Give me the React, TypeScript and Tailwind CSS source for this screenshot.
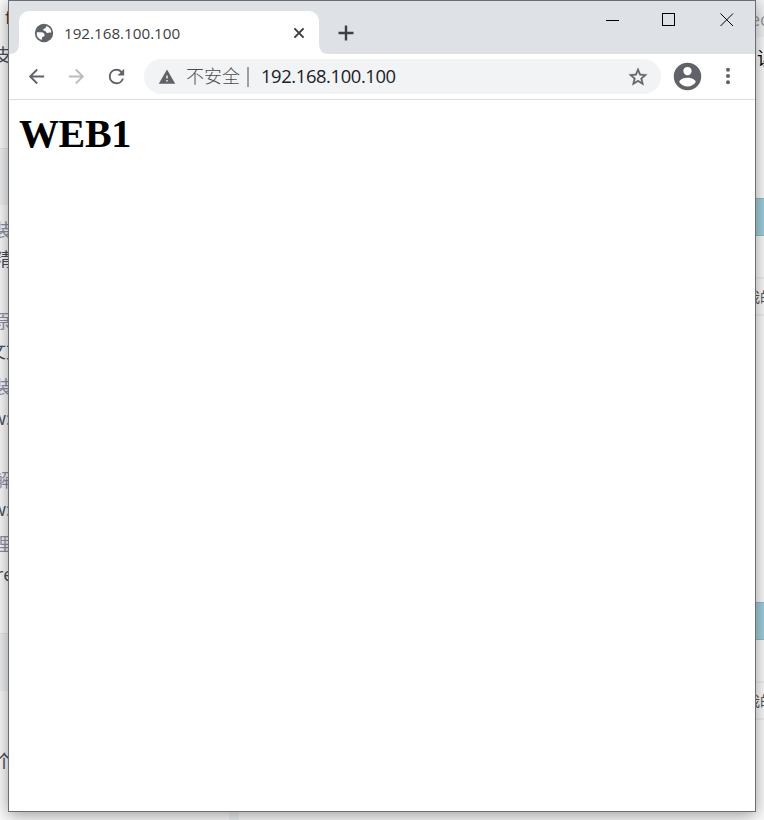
import type { ReactNode } from "react";
import clsx from "clsx";

type Band = {
  height: string;
  className?: string;
  text?: string;
};

// Page behind the window, left edge
const leftBands: Band[] = [
  { height: "h-[35px]", className: "text-[19px] text-[#333] pl-[5px]", text: "f" },
  { height: "h-[9px]" },
  { height: "h-[22px]", className: "text-[18px] text-[#4d4d5c] -ml-[6px]", text: "支" },
  { height: "h-[82px]" },
  { height: "h-[57px]", className: "bg-[#f0f1f2] border-t border-[#e6eaec]" },
  { height: "h-[11px]" },
  { height: "h-[28px]", className: "text-[18px] text-[#9090a6] -ml-[6px]", text: "装" },
  { height: "h-[30px]", className: "text-[18px] text-[#4d4d5c] -ml-[6px]", text: "精" },
  { height: "h-[32px]" },
  { height: "h-[30px]", className: "text-[18px] text-[#9090a6] -ml-[7px]", text: "原" },
  { height: "h-[30px]", className: "text-[18px] text-[#4d4d5c] -ml-[12px]", text: "文文" },
  { height: "h-[42px]", className: "text-[18px] text-[#9090a6] -ml-[6px]", text: "装" },
  { height: "h-[20px]", className: "text-[18px] text-[#4d4d5c] -ml-[8px]", text: "w:" },
  { height: "h-[38px]" },
  { height: "h-[28px]", className: "text-[18px] text-[#9090a6] -ml-[7px]", text: "解" },
  { height: "h-[30px]", className: "text-[18px] text-[#4d4d5c] -ml-[8px]", text: "w:" },
  { height: "h-[40px]", className: "text-[18px] text-[#9090a6] -ml-[7px]", text: "理" },
  { height: "h-[20px]", className: "text-[18px] text-[#4d4d5c] -ml-[4px]", text: "re" },
  { height: "h-[49px]" },
  { height: "h-[58px]", className: "bg-[#f0f1f2] border-t border-[#e6eaec]" },
  { height: "h-[60px]" },
  { height: "h-[20px]", className: "text-[18px] text-[#4d4d5c] -ml-[5px]", text: "个" },
];

// Page behind the window, right edge
const rightBands: Band[] = [
  { height: "h-[37px]", className: "bg-[#f2f4f5] text-[18px] text-[#999] -ml-[5px] -mr-[2px]", text: "ec" },
  { height: "h-[7px]" },
  { height: "h-[28px]", className: "text-[18px] text-black pl-[2px]", text: "误" },
  { height: "h-[126px]" },
  { height: "h-[38px]", className: "bg-[#a0d0dc] border-y border-[#90bfca]" },
  { height: "h-[41px]" },
  { height: "h-[39px]", className: "border-y-2 border-[#f0f0f0] text-[14px] text-[#555] -ml-[9px]", text: "我的" },
  { height: "h-[286px]" },
  { height: "h-[38px]", className: "bg-[#a0d0dc] border-y border-[#90bfca]" },
  { height: "h-[41px]" },
  { height: "h-[39px]", className: "border-y-2 border-[#f0f0f0] text-[14px] text-[#555] -ml-[9px]", text: "我的" },
];

function Bands({ bands }: { bands: Band[] }) {
  return (
    <div className="w-[9px] shrink-0 overflow-hidden">
      {bands.map((band, i) => (
        <div
          key={i}
          className={clsx("flex items-center whitespace-nowrap leading-none", band.height, band.className)}
        >
          {band.text}
        </div>
      ))}
    </div>
  );
}

function Icon({ className, children }: { className: string; children: ReactNode }) {
  return (
    <svg viewBox="0 0 24 24" className={clsx("shrink-0", className)} fill="currentColor">
      {children}
    </svg>
  );
}

function TabStrip() {
  return (
    <div className="flex h-[53px] bg-[#dee1e6] pt-[10px]">
      <svg width="10" height="10" viewBox="0 0 10 10" className="self-end shrink-0">
        <path d="M0 10H10V0Q10 10 0 10Z" fill="#fff" />
      </svg>
      <div className="flex w-[300px] items-center rounded-t-[10px] bg-white pl-[14px] pr-[12px]">
        <Icon className="h-[22px] w-[22px] text-[#5f6368]">
          <circle cx="12" cy="12" r="10" />
          <path
            fill="#fff"
            d="M14.5 4.3c0 1.3-.6 2.4-1.9 2.7-.9.2-1.500.6-1.400 1.500.2.9.8 1.200 1.700 1.300 1.400.2 1.300 1.900 2.600 2.200 1.100.2 2.200-.5 4.500-.4a8 8 0 0 0-5.500-7.300zM4.100 11.200h4.700c2.500 0 3.800 1.200 3.800 3.200 0 1-.6 1.500-1.600 1.600-.8.1-1.100.6-1.200 1.300l-.2 2.400a8 8 0 0 1-5.500-8.500z"
          />
        </Icon>
        <span className="ml-[9px] text-[15.2px] leading-5 text-[#3c4043]">192.168.100.100</span>
        <svg viewBox="0 0 16 16" className="ml-auto h-4 w-4" stroke="#3c4043" strokeWidth="2">
          <path d="M3.4 3.4l9.2 9.2M12.6 3.4l-9.2 9.2" />
        </svg>
      </div>
      <svg width="10" height="10" viewBox="0 0 10 10" className="self-end shrink-0">
        <path d="M10 10H0V0Q0 10 10 10Z" fill="#fff" />
      </svg>
      <svg viewBox="0 0 16 16" className="ml-[9px] mt-[14px] h-4 w-4" stroke="#3c4043" strokeWidth="2.4">
        <path d="M8 .5v15M.5 8h15" />
      </svg>
      <div className="-mt-[10px] ml-auto flex h-[37px] items-center gap-[43px] pr-[21px] text-black">
        <svg width="14" height="14" viewBox="0 0 14 14">
          <path d="M0 7.5h13" stroke="currentColor" />
        </svg>
        <svg width="14" height="14" viewBox="0 0 14 14" className="-ml-px">
          <rect x=".5" y=".5" width="12" height="12" fill="none" stroke="currentColor" />
        </svg>
        <svg width="14" height="14" viewBox="0 0 14 14" className="ml-px">
          <path d="M.5.5l12.5 12.5M13 .5L.5 13" stroke="currentColor" />
        </svg>
      </div>
    </div>
  );
}

function Toolbar() {
  return (
    <div className="flex h-[46px] items-center border-b border-[#dadce0] bg-white pl-4 text-[#5f6368]">
      <Icon className="h-[23px] w-[23px]">
        <path d="M20 11H7.83l5.59-5.59L12 4l-8 8 8 8 1.41-1.41L7.83 13H20v-2z" />
      </Icon>
      <Icon className="ml-[17px] h-[23px] w-[23px] text-[#babcbe]">
        <path d="M12 4l-1.41 1.41L16.17 11H4v2h12.17l-5.58 5.59L12 20l8-8z" />
      </Icon>
      <Icon className="ml-[17px] h-[23px] w-[23px]">
        <path d="M17.65 6.35A7.96 7.96 0 0 0 12 4a8 8 0 1 0 7.73 10h-2.08A6 6 0 1 1 12 6c1.66 0 3.14.69 4.22 1.78L13 11h7V4l-2.35 2.35z" />
      </Icon>

      <div className="ml-4 flex h-[35px] w-[517px] items-center rounded-full bg-[#f1f3f4] pl-[14px] pr-[12px]">
        <Icon className="h-[18px] w-[18px]">
          <path d="M1 21h22L12 2 1 21zm12-3h-2v-2h2v2zm0-4h-2v-4h2v4z" />
        </Icon>
        <span className="-mt-px ml-[10px] text-[18px] font-light leading-6 text-[#4a4d51]">不安全</span>
        <span className="ml-[7px] h-5 w-[2px] bg-[#9aa0a6]" />
        <span className="-mt-[2px] ml-[12px] text-[18.4px] leading-6 tracking-[-0.4px] text-[#202124]">
          192.168.100.100
        </span>
        <Icon className="ml-auto h-[22px] w-[22px]">
          <path
            stroke="currentColor"
            strokeWidth=".4"
            d="M22 9.24l-7.19-.62L12 2 9.19 8.63 2 9.24l5.46 4.73L5.82 21 12 17.27 18.18 21l-1.63-7.03L22 9.24zM12 15.4l-3.76 2.27 1-4.28-3.32-2.88 4.38-.38L12 6.1l1.71 4.04 4.38.38-3.32 2.88 1 4.28L12 15.4z"
          />
        </Icon>
      </div>

      <Icon className="ml-[10px] h-[33px] w-[33px]">
        <path d="M12 2a10 10 0 1 0 0 20 10 10 0 0 0 0-20zm0 3a3 3 0 1 1 0 6 3 3 0 0 1 0-6zm0 14.2a7.2 7.2 0 0 1-6-3.22c.03-1.99 4-3.08 6-3.08s5.97 1.09 6 3.08a7.2 7.2 0 0 1-6 3.22z" />
      </Icon>
      <Icon className="-mt-px ml-[12px] h-6 w-6">
        <circle cx="12" cy="5.8" r="2" />
        <circle cx="12" cy="12" r="2" />
        <circle cx="12" cy="18.2" r="2" />
      </Icon>
    </div>
  );
}

export default function App() {
  return (
    <div className="relative flex h-[820px] w-[764px] overflow-hidden bg-[#fcfcfc] font-['Open_Sans','Noto_Sans_CJK_SC',sans-serif]">
      <Bands bands={leftBands} />
      <div className="ml-[220px] w-[10px] bg-[#eff2f4]" />
      <div className="grow bg-[#fcfcfc]" />
      <Bands bands={rightBands} />

      {/* Browser window on top of the page */}
      <div className="absolute left-[8px] top-0 flex h-[812px] w-[748px] flex-col border border-[#6b6d70] bg-white shadow-[0_3px_16px_rgba(0,0,0,0.4)]">
        <TabStrip />
        <Toolbar />
        <main className="grow px-[10px] pt-[11px]">
          <h1 className="font-['Liberation_Serif',serif] text-[40px] font-bold leading-[46px] tracking-[-0.4px] text-black">
            WEB1
          </h1>
        </main>
      </div>
    </div>
  );
}
